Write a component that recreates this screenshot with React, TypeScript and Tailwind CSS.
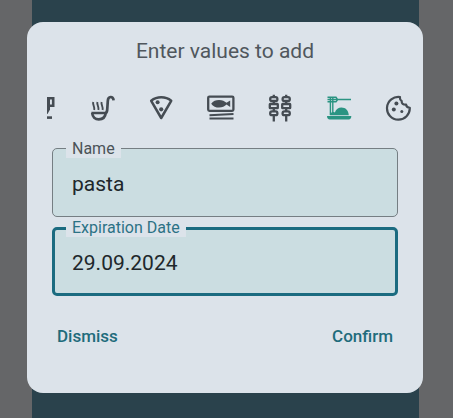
import { useState } from "react";
import type { ReactNode } from "react";

type Food = { id: string; label: string; art: ReactNode };

const skewer = (x: number) => (
  <g key={x} transform={`translate(${x} 0)`}>
    <path d="M0 -1.200v3M0 5v3M0 12v3M0 19v6.500" />
    <rect x="-3.600" y="1.200" width="7.200" height="3.800" rx="1.800" />
    <rect x="-4" y="8" width="8" height="4.200" rx="0.400" />
    <rect x="-3.600" y="15.400" width="7.200" height="3.800" rx="1.800" />
  </g>
);

const foods: Food[] = [
  {
    id: "drink",
    label: "Drink",
    art: (
      <>
        <path d="M3 2.300h18.200v7.400H16.500M3 2.300V14" strokeWidth="2.600" />
        <path d="M15 1h3v12.500L15.500 18H14z" fill="currentColor" stroke="none" />
        <path d="M3 21.600h17" strokeWidth="2.600" />
      </>
    ),
  },
  {
    id: "soup",
    label: "Soup",
    art: (
      <>
        <path d="M.4 17H14c1.600 0 2-1 2.200-3l.6-9c.2-5 5.400-5.400 5.800-.6" strokeWidth="2.700" />
        <path d="M1.200 17c.3 4 3 6.400 6.600 6.400s6.500-2.200 7-6.900" strokeWidth="2.700" />
        <path
          d="M2.200 6c-.8 3 1.800 4.500 1 8M6.400 6c-.8 3 1.800 4.500 1 8M10.600 6c-.8 3 1.800 4.500 1 8"
          strokeWidth="1.900"
        />
      </>
    ),
  },
  {
    id: "pizza",
    label: "Pizza",
    art: (
      <>
        <path d="M1.200 4.800C7 .2 15.500.2 21.200 4.800L11.200 22z" strokeWidth="2.500" strokeLinejoin="round" />
        <circle cx="7.600" cy="6.300" r="2" fill="currentColor" stroke="none" />
        <circle cx="11.200" cy="13.300" r="2.100" fill="currentColor" stroke="none" />
      </>
    ),
  },
  {
    id: "fish",
    label: "Canned fish",
    art: (
      <>
        <rect x="-0.800" y="0.600" width="25.200" height="14.200" rx="1.200" strokeWidth="2.300" />
        <path
          d="M2.200 7.700C4 4.800 7 3.900 10 3.900c3.500 0 5.500 1.300 7.500 2.900l3.700-2.400v6.600l-3.700-2.400c-2 1.900-4 3-7.500 3-3 0-6-.9-7.800-3.900z"
          fill="currentColor"
          stroke="none"
        />
        <path d="M.5 19.200l24-1.200M.5 22.500h24" strokeWidth="1.900" />
      </>
    ),
  },
  {
    id: "skewers",
    label: "Skewers",
    art: <g strokeWidth="2.300">{[5.8, 18.2].map(skewer)}</g>,
  },
  {
    id: "pasta",
    label: "Pasta",
    art: (
      <>
        <path d="M.5 1.300h8.500l1.200 1.700v1.200L9 5.800H.5M.5 3.500h23.500" strokeWidth="1.400" />
        <path d="M3.400 1v18M5.800 1v18" strokeWidth="1.400" />
        <path
          d="M3 19.200c0-2.500 2.500-4 4.800-2.800C9 13.300 11.500 11.600 14.500 11.600c4 0 6.800 2.700 7.300 7.600z"
          fill="currentColor"
          stroke="none"
        />
        <path d="M0 20h24.300c0 2-1 3.500-2.500 3.500h-19C1 23.500 0 22 0 20z" fill="currentColor" stroke="none" />
      </>
    ),
  },
  {
    id: "cookie",
    label: "Cookie",
    art: (
      <>
        <path
          d="M14 1A11.400 11.400 0 1 0 23.800 11.800c-2.200 0-3.500-1-3.700-3.100-3 .2-4.600-1.200-4.400-3.600C14.200 4.400 13.700 3 14 1z"
          strokeWidth="2.200"
          strokeLinejoin="round"
        />
        <circle cx="10.400" cy="7.600" r="2" fill="currentColor" stroke="none" />
        <circle cx="7.800" cy="13.600" r="2" fill="currentColor" stroke="none" />
        <circle cx="15.800" cy="15.500" r="1.500" fill="currentColor" stroke="none" />
      </>
    ),
  },
];

type FieldProps = {
  id: string;
  label: string;
  value: string;
  active?: boolean;
  onChange: (value: string) => void;
};

function Field({ id, label, value, active = false, onChange }: FieldProps) {
  return (
    <div className="relative">
      <label
        htmlFor={id}
        className={
          active
            ? "absolute -top-2 left-[14px] bg-[#dce3ea] px-[6px] text-base leading-[18px] text-[#2c7285]"
            : "absolute -top-2 left-[14px] bg-[#dce3ea] px-[6px] text-base leading-[18px] text-[#4b5358]"
        }
      >
        {label}
      </label>
      <input
        id={id}
        type="text"
        value={value}
        onChange={(event) => onChange(event.target.value)}
        className={
          active
            ? "block h-[69px] w-full rounded-[5px] border-[3px] border-[#1b6b80] bg-[#cbdde1] px-[17px] pt-[2px] text-[21px] text-[#20272b] outline-none"
            : "block h-[69px] w-full rounded-[5px] border border-[#757e83] bg-[#cbdde1] px-[19px] pt-[2px] text-[21px] text-[#20272b] outline-none"
        }
      />
    </div>
  );
}

export default function App() {
  const [name, setName] = useState("pasta");
  const [date, setDate] = useState("29.09.2024");
  const [selected, setSelected] = useState("pasta");

  return (
    <div className="min-h-screen bg-[#656668] pr-[34px] pl-8 font-[Roboto,sans-serif]">
      <div className="min-h-screen bg-[#2a424c] py-[22px]">
        <main
          role="dialog"
          aria-labelledby="dialog-title"
          className="-mr-1 -ml-[5px] rounded-[16px] bg-[#dce3ea] pt-[15px] pb-9"
        >
          <h1 id="dialog-title" className="text-center text-[21px] leading-7 text-[#50575d]">
            Enter values to add
          </h1>
          <div className="mt-[31px] mr-3 ml-5 flex justify-end gap-[35px] overflow-x-clip pr-px">
            {foods.map((food) => (
              <button
                key={food.id}
                type="button"
                aria-label={food.label}
                aria-pressed={selected === food.id}
                onClick={() => setSelected(food.id)}
                className={
                  selected === food.id
                    ? "size-6 shrink-0 text-[#2b9482]"
                    : "size-6 shrink-0 text-[#454c53]"
                }
              >
                <svg
                  viewBox="0 0 24 24"
                  className="size-6 overflow-visible"
                  fill="none"
                  stroke="currentColor"
                  aria-hidden="true"
                >
                  {food.art}
                </svg>
              </button>
            ))}
          </div>
          <div className="mt-7 flex flex-col gap-[10px] px-[25px]">
            <Field id="name" label="Name" value={name} onChange={setName} />
            <Field id="date" label="Expiration Date" value={date} active onChange={setDate} />
          </div>
          <div className="mt-[21px] flex justify-between px-[30px] text-[17px] font-medium text-[#1f6c7c]">
            <button type="button" className="h-10">
              Dismiss
            </button>
            <button type="button" className="h-10">
              Confirm
            </button>
          </div>
        </main>
      </div>
    </div>
  );
}
